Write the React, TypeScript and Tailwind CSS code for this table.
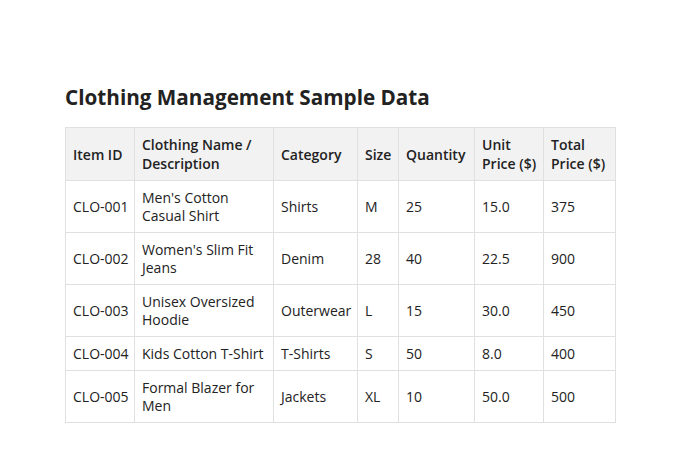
const headers = [
  ['Item ID'],
  ['Clothing Name /', 'Description'],
  ['Category'],
  ['Size'],
  ['Quantity'],
  ['Unit', 'Price ($)'],
  ['Total', 'Price ($)'],
];

const widths = ['w-[69px]', 'w-[139px]', 'w-[84px]', 'w-[41px]', 'w-[76px]', 'w-[69px]', 'w-[72px]'];

const rows = [
  ['CLO-001', ["Men's Cotton", 'Casual Shirt'], 'Shirts', 'M', '25', '15.0', '375'],
  ['CLO-002', ["Women's Slim Fit", 'Jeans'], 'Denim', '28', '40', '22.5', '900'],
  ['CLO-003', ['Unisex Oversized', 'Hoodie'], 'Outerwear', 'L', '15', '30.0', '450'],
  ['CLO-004', ['Kids Cotton T-Shirt'], 'T-Shirts', 'S', '50', '8.0', '400'],
  ['CLO-005', ['Formal Blazer for', 'Men'], 'Jackets', 'XL', '10', '50.0', '500'],
];

function Lines({ value }: { value: string | string[] }) {
  const lines = Array.isArray(value) ? value : [value];
  return (
    <>
      {lines.map((l, i) => (
        <div key={i}>{l}</div>
      ))}
    </>
  );
}

export default function App() {
  return (
    <div className="min-h-screen bg-white px-[65px] pt-[82px] text-[#222] font-['Open_Sans',sans-serif]">
      <h1 className="text-[20.7px] leading-[30px] font-bold mb-[15px]">Clothing Management Sample Data</h1>
      <table className="table-fixed border-collapse w-[550px] text-[14px]">
        <thead>
          <tr className="bg-[#f2f2f2]">
            {headers.map((h, i) => (
              <th
                key={i}
                className={`${widths[i]} border border-[#e0e0e0] px-[7px] py-[7px] leading-[19px] text-left font-semibold align-middle whitespace-nowrap`}
              >
                <Lines value={h} />
              </th>
            ))}
          </tr>
        </thead>
        <tbody>
          {rows.map((r) => (
            <tr key={r[0] as string}>
              {r.map((c, i) => (
                <td key={i} className="border border-[#e0e0e0] px-[7px] py-[7.5px] leading-[18px] align-middle whitespace-nowrap">
                  <Lines value={c} />
                </td>
              ))}
            </tr>
          ))}
        </tbody>
      </table>
    </div>
  );
}
